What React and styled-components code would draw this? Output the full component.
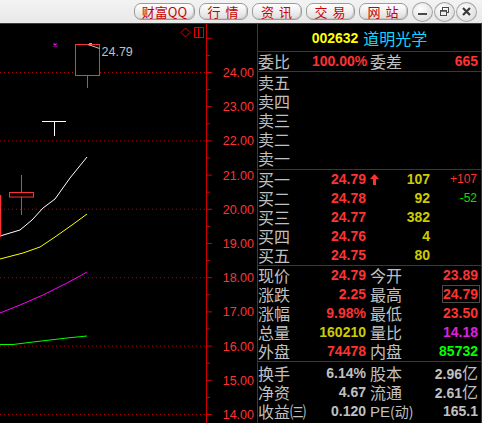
import React from 'react';
import styled, { createGlobalStyle } from 'styled-components';

const Global = createGlobalStyle`
  html, body { margin: 0; padding: 0; background: #000; }
  body { width: 482px; height: 423px; overflow: hidden; font-family: "Liberation Sans", Arial, sans-serif; }
`;

const RED = '#ff3232';
const GRAY = '#c0c0c0';
const LINE = '#c00000';
const CJK = `"Noto Sans CJK SC", "Liberation Sans", sans-serif`;

const Frame = styled.div`
  width: 482px;
  height: 423px;
  display: flex;
  flex-direction: column;
  background: #000;
  overflow: hidden;
`;

const TopBar = styled.div`
  height: 23px;
  flex: none;
  background: linear-gradient(#f3f3f3, #e8e8e8);
  border-bottom: 1px solid #3c3c3c;
  display: flex;
  align-items: center;
  justify-content: flex-end;
  padding-right: 5px;
`;

const NavGroup = styled.div`
  display: flex;
  gap: 4px;
  margin-right: 4px;
`;

const NavButton = styled.div`
  width: ${p => p.$w}px;
  height: 17px;
  box-sizing: border-box;
  border: 1px solid #9c9c9c;
  border-radius: 7px;
  background: linear-gradient(#ffffff 0%, #f1f1f1 45%, #dcdcdc 100%);
  box-shadow: inset -1px -1px 0 #c8c8c8;
  display: flex;
  align-items: center;
  justify-content: center;
  font-family: ${CJK};
  font-size: 13px;
  line-height: 15px;
  color: #c80000;
  letter-spacing: ${p => p.$ls || 0}px;
  white-space: pre;
`;

const WinGroup = styled.div`
  display: flex;
  gap: 1px;
`;

const WinButton = styled.div`
  width: 21px;
  height: 20px;
  box-sizing: border-box;
  border: 1px solid #a4a4a4;
  border-radius: 50%;
  background: radial-gradient(circle at 40% 35%, #ffffff, #e2e2e2 70%, #cfcfcf);
  display: flex;
  align-items: center;
  justify-content: center;
`;

const Main = styled.div`
  flex: 1;
  display: flex;
`;

const ChartBox = styled.div`
  width: 257px;
  flex: none;
`;

const Panel = styled.div`
  width: 225px;
  box-sizing: border-box;
  border-left: 1px solid ${LINE};
  border-right: 1px solid ${LINE};
  display: flex;
  flex-direction: column;
`;

const Header = styled.div`
  height: 27px;
  border-bottom: 1px solid ${LINE};
  display: flex;
  align-items: center;
  justify-content: center;
  gap: 5px;
`;

const Code = styled.span`
  font: bold 14px "Liberation Sans", Arial, sans-serif;
  color: #ffff00;
`;

const Name = styled.span`
  font-family: ${CJK};
  font-size: 16px;
  color: #14d6ff;
  line-height: 20px;
`;

const Section = styled.div`
  padding: ${p => p.$pt || 0}px 0 ${p => p.$pb || 0}px;
  border-bottom: ${p => (p.$last ? 'none' : `1px solid ${LINE}`)};
`;

const QuoteRow = styled.div`
  height: 19px;
  display: grid;
  grid-template-columns: 54px 54px 52px 62px;
  align-items: center;
`;

const BidRow = styled.div`
  height: 19px;
  display: grid;
  grid-template-columns: 54px 54px 14px 50px 50px;
  align-items: center;
`;

const Label = styled.span`
  font-family: ${CJK};
  font-size: 16px;
  line-height: 19px;
  color: ${GRAY};
  white-space: nowrap;
  padding-left: ${p => p.$pl || 0}px;
`;

const Paren = styled.span`
  font-family: ${CJK};
  font-size: 14px;
`;

const Latin = styled.span`
  font-family: "Liberation Sans", Arial, sans-serif;
  font-size: 15px;
`;

const Num = styled.span`
  font: bold 14px "Liberation Sans", Arial, sans-serif;
  line-height: 19px;
  color: ${p => p.$c || RED};
  text-align: right;
  white-space: nowrap;
  padding-right: ${p => p.$pr || 0}px;
`;

const Unit = styled.span`
  font-family: ${CJK};
  font-weight: normal;
  font-size: 16px;
`;

const Boxed = styled.span`
  display: inline-block;
  box-sizing: border-box;
  width: 38px;
  height: 18px;
  line-height: 16px;
  border: 1px solid #4a4a4a;
  padding-right: 1px;
  text-align: right;
`;

const Delta = styled.span`
  font: 12px "Liberation Sans", Arial, sans-serif;
  line-height: 19px;
  color: ${p => p.$c};
  text-align: right;
  padding-right: 3px;
`;

const ArrowCell = styled.span`
  display: flex;
  align-items: center;
  padding-left: 4px;
`;

const yv = v => 72 + (24 - v) * 34.2;

function Chart() {
  const grid = [24, 22, 20, 18, 16, 14];
  const labels = [24, 23, 22, 21, 20, 19, 18, 17, 16, 15, 14];
  const halfTicks = [];
  for (let v = 14; v <= 25.5; v += 0.5) halfTicks.push(v);
  return (
    <svg width="257" height="399" viewBox="0 24 257 399" style={{ display: 'block' }}>
      {grid.map(v => (
        <line key={v} x1="0" x2="206" y1={yv(v) + 0.5} y2={yv(v) + 0.5} stroke="#b40000" strokeDasharray="1 3" />
      ))}
      <line x1="206.5" x2="206.5" y1="24" y2="423" stroke="#d00000" />
      {halfTicks.map(v => (
        <line key={v} x1="207" x2={Number.isInteger(v) ? 212 : 210} y1={yv(v) + 0.5} y2={yv(v) + 0.5} stroke="#d00000" />
      ))}
      {labels.map(v => (
        <text key={v} x="254" y={yv(v) + 5} textAnchor="end" fill={RED}
          style={{ font: '12.5px "Liberation Sans", Arial, sans-serif' }}>
          {v.toFixed(2)}
        </text>
      ))}
      {/* corner icons */}
      <polygon points="185.5,28 190,32.5 185.5,37 181,32.5" fill="none" stroke="#e00000" />
      <rect x="194.5" y="27.5" width="9" height="10" fill="none" stroke="#e00000" />
      <line x1="198.5" x2="198.5" y1="28" y2="37" stroke="#e00000" />
      {/* MA lines */}
      <polyline fill="none" stroke="#00ff00" points="0,344.5 13,344.5 33,342 50,340 67,338 87,336" />
      <polyline fill="none" stroke="#ff00ff" points="0,313 20,305 43,295 67,283 80,276 87,272" />
      <polyline fill="none" stroke="#ffff00" points="0,259 23,253 40,247 55,237 72,225 87,214" />
      <polyline fill="none" stroke="#ffffff" points="0,236 20,230 32,220 43,208 55,199 70,178 87,157" />
      {/* candles */}
      <line x1="0.5" x2="0.5" y1="195" y2="237" stroke={RED} strokeWidth="1.5" />
      <line x1="21.5" x2="21.5" y1="175" y2="192.5" stroke={RED} />
      <line x1="21.5" x2="21.5" y1="197" y2="215" stroke={RED} />
      <rect x="9.5" y="192.5" width="24" height="4.5" fill="#000" stroke={RED} />
      <line x1="42" x2="66" y1="121.5" y2="121.5" stroke="#ffffff" />
      <line x1="54.5" x2="54.5" y1="121.5" y2="136" stroke="#ffffff" />
      <line x1="87.5" x2="87.5" y1="75.5" y2="88" stroke={RED} />
      <rect x="75.5" y="44.5" width="24" height="31" fill="#000" stroke={RED} />
      <path d="M53.5 43.5 L56.5 46.5 M56.5 43.5 L53.5 46.5" stroke="#ff00ff" strokeWidth="1.2" />
      <path d="M92 43.5 L89.5 43.5 L88.5 45 L91 45.5 L99.5 48.5" fill="none" stroke={GRAY} />
      <text x="101.5" y="56" fill={GRAY} style={{ font: '12.5px "Liberation Sans", Arial, sans-serif' }}>24.79</text>
    </svg>
  );
}

const UpArrow = () => (
  <svg width="9" height="11" viewBox="0 0 9 11">
    <path d="M4.5 0 L9 5 L6 5 L6 11 L3 11 L3 5 L0 5 Z" fill={RED} />
  </svg>
);

const sells = ['卖五', '卖四', '卖三', '卖二', '卖一'];
const buys = [
  ['买一', '24.79', '107', '+107', RED, true],
  ['买二', '24.78', '92', '-52', '#00e000'],
  ['买三', '24.77', '382'],
  ['买四', '24.76', '4'],
  ['买五', '24.75', '80'],
];

export default function App() {
  return (
    <Frame>
      <Global />
      <TopBar>
        <NavGroup>
          <NavButton $w={61}>财富QQ</NavButton>
          <NavButton $w={49} $ls={1}>行 情</NavButton>
          <NavButton $w={50} $ls={1}>资 讯</NavButton>
          <NavButton $w={49} $ls={1}>交 易</NavButton>
          <NavButton $w={49} $ls={1}>网 站</NavButton>
        </NavGroup>
        <WinGroup>
          <WinButton>
            <svg width="11" height="11" viewBox="0 0 11 11">
              <rect x="1" y="7" width="9" height="2" fill="#4a4a4a" />
            </svg>
          </WinButton>
          <WinButton>
            <svg width="11" height="11" viewBox="0 0 11 11">
              <rect x="3.5" y="1.5" width="6" height="5" fill="none" stroke="#4a4a4a" />
              <rect x="1.5" y="4.5" width="6" height="5" fill="#eee" stroke="#4a4a4a" />
              <line x1="1.5" x2="7.5" y1="5" y2="5" stroke="#4a4a4a" strokeWidth="1.5" />
            </svg>
          </WinButton>
          <WinButton>
            <svg width="11" height="11" viewBox="0 0 11 11">
              <path d="M2 2 L9 9 M9 2 L2 9" stroke="#3a3a3a" strokeWidth="2.2" />
            </svg>
          </WinButton>
        </WinGroup>
      </TopBar>
      <Main>
        <ChartBox>
          <Chart />
        </ChartBox>
        <Panel>
          <Header>
            <Code>002632</Code>
            <Name>道明光学</Name>
          </Header>
          <Section>
            <QuoteRow>
              <Label>委比</Label>
              <Num>100.00%</Num>
              <Label $pl={4}>委差</Label>
              <Num $pr={2}>665</Num>
            </QuoteRow>
          </Section>
          <Section $pt={1} $pb={1}>
            {sells.map(s => (
              <QuoteRow key={s}>
                <Label>{s}</Label>
              </QuoteRow>
            ))}
          </Section>
          <Section>
            {buys.map(([l, p, v, d, dc, up]) => (
              <BidRow key={l}>
                <Label>{l}</Label>
                <Num>{p}</Num>
                <ArrowCell>{up ? <UpArrow /> : null}</ArrowCell>
                <Num $c="#cccc00">{v}</Num>
                <Delta $c={dc}>{d || ''}</Delta>
              </BidRow>
            ))}
          </Section>
          <Section>
            <QuoteRow>
              <Label>现价</Label>
              <Num>24.79</Num>
              <Label $pl={4}>今开</Label>
              <Num $pr={2}>23.89</Num>
            </QuoteRow>
            <QuoteRow>
              <Label>涨跌</Label>
              <Num>2.25</Num>
              <Label $pl={4}>最高</Label>
              <Num><Boxed>24.79</Boxed></Num>
            </QuoteRow>
            <QuoteRow>
              <Label>涨幅</Label>
              <Num>9.98%</Num>
              <Label $pl={4}>最低</Label>
              <Num $pr={2}>23.50</Num>
            </QuoteRow>
            <QuoteRow>
              <Label>总量</Label>
              <Num $c="#cccc00">160210</Num>
              <Label $pl={4}>量比</Label>
              <Num $pr={2} $c="#e020e0">14.18</Num>
            </QuoteRow>
            <QuoteRow>
              <Label>外盘</Label>
              <Num>74478</Num>
              <Label $pl={4}>内盘</Label>
              <Num $pr={2} $c="#00ff00">85732</Num>
            </QuoteRow>
          </Section>
          <Section $pt={1} $last>
            <QuoteRow>
              <Label>换手</Label>
              <Num $c={GRAY}>6.14%</Num>
              <Label $pl={4}>股本</Label>
              <Num $pr={2} $c={GRAY}>2.96<Unit>亿</Unit></Num>
            </QuoteRow>
            <QuoteRow>
              <Label>净资</Label>
              <Num $c={GRAY}>4.67</Num>
              <Label $pl={4}>流通</Label>
              <Num $pr={2} $c={GRAY}>2.61<Unit>亿</Unit></Num>
            </QuoteRow>
            <QuoteRow>
              <Label>收益㈢</Label>
              <Num $c={GRAY}>0.120</Num>
              <Label $pl={4}><Latin>PE</Latin><Paren>(动)</Paren></Label>
              <Num $pr={2} $c={GRAY}>165.1</Num>
            </QuoteRow>
          </Section>
        </Panel>
      </Main>
    </Frame>
  );
}
